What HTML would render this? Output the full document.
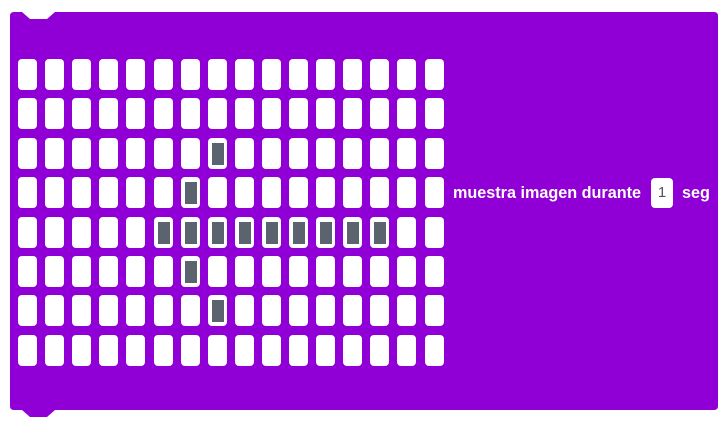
<!DOCTYPE html>
<html><head><style>
body{margin:0;width:728px;height:430px;background:#fff;position:relative;overflow:hidden;font-family:"Liberation Sans",sans-serif}
.c{position:absolute;width:19px;height:31px;background:#fff;border-radius:4px}
.d{position:absolute;left:4px;top:5px;width:12px;height:22px;background:#5b636e}
.t{position:absolute;color:#fff;font-weight:bold;font-size:16.2px;top:184px}
</style></head><body>
<svg width="728" height="430" style="position:absolute;left:0;top:0">
<path d="M14 12 H22 L30 19 H47 L55 12 H714 Q718 12 718 16 V406 Q718 410 714 410 H55 L47 417 H30 L22 410 H14 Q10 410 10 406 V16 Q10 12 14 12 Z" fill="#9000d6"/>
</svg>
<div id="g"></div>
<div class="t" style="left:453px">muestra imagen durante</div>
<div style="position:absolute;left:651px;top:178px;width:22px;height:30px;background:#fff;border-radius:4px;color:#555;font-size:15px;text-align:center;line-height:30px">1</div>
<div class="t" style="left:682px">seg</div>
<script>
var on={"2,7":1,"3,6":1,"5,6":1,"6,7":1};for(var k=5;k<=13;k++)on["4,"+k]=1;
var h="";for(var r=0;r<8;r++)for(var c=0;c<16;c++){var x=18+c*27.1,y=59+r*39.4;h+='<div class="c" style="left:'+x+'px;top:'+y+'px">'+(on[r+","+c]?'<div class="d"></div>':'')+'</div>';}
document.getElementById("g").innerHTML=h;
</script>
</body></html>
